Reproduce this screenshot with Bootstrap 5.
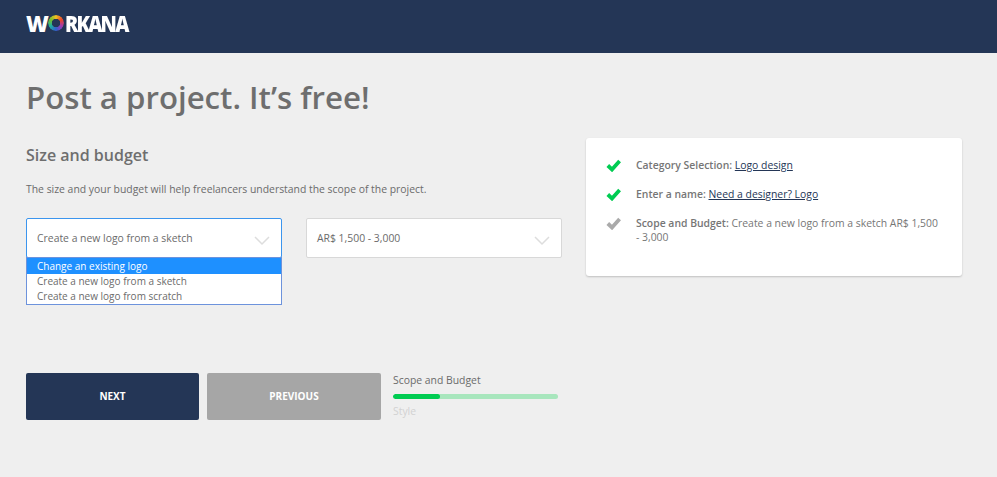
<!DOCTYPE html>
<html lang="en">
<head>
<meta charset="utf-8">
<title>Workana</title>
<link href="https://cdn.jsdelivr.net/npm/bootstrap@5.3.0/dist/css/bootstrap.min.css" rel="stylesheet">
<style>
html,body{height:477px;overflow:hidden}
body{background:#efefef;font-family:"Open Sans",sans-serif;color:#6b6b6b;font-size:10.4px}
.top-bar{height:53px;background:#243656;padding:11px 26px 0}
.brand-word{font-family:"Open Sans",sans-serif;font-weight:800;font-size:22px;line-height:24px;color:#fff;letter-spacing:-2px;display:flex;align-items:center}
.brand-o{display:inline-block;color:transparent;width:16px;height:16px;line-height:16px;margin:0 1px 0 1px;border-radius:50%;font-size:10px;letter-spacing:0;text-align:center;background:conic-gradient(#f0c020,#e8452c,#a23bb0,#3060d0,#20b0a0,#70c030,#f0c020);-webkit-mask:radial-gradient(circle,transparent 4px,#000 4.5px);mask:radial-gradient(circle,transparent 4px,#000 4.5px)}
.brand-rest{display:inline-block;transform:scaleX(.89);transform-origin:left center}
.page-body{padding:0 26px}
.page-title{font-size:31.2px;font-weight:600;color:#6e6e6e;line-height:44px;margin:22px 0 0}
.left-col{width:536px}
.right-col{width:376px;margin-left:24px;margin-top:19px}
.sub-title{font-size:16px;font-weight:600;color:#6e6e6e;line-height:22px;margin:25px 0 0}
.help-line{font-size:10.4px;line-height:14px;margin:16px 0 0}
.pick-row{gap:24px;margin-top:22px;height:155px}
.pick-wrap{width:256px;position:relative}
.pick-box{height:40px;background:#fff;border:1px solid #d8d8d8;border-radius:2px;padding:0 10px;line-height:38px;font-size:10.4px;position:relative}
.pick-box.is-open{border-color:#3b95ee}
.pick-chev{position:absolute;right:11px;top:17px}
.pick-list{border:1px solid #6d93dc;background:#fff;margin:0;padding:0;list-style:none;position:absolute;left:0;right:0;top:39px;font-size:10px}
.pick-list li{height:15px;line-height:15px;padding:0 10px}
.pick-list li.is-active{background:#1e90ff;color:#fff;height:16px;line-height:16px}
.act-btn{height:47px;border:0;border-radius:2px;color:#fff;font-size:10px;font-weight:700;width:173px;padding:0}
.btn-next{background:#243656}
.btn-next:hover{background:#243656;color:#fff}
.btn-prev{background:#a6a6a6;width:174px;margin-left:8px}
.step-box{width:165px;margin-left:12px;font-size:10.4px}
.step-now{line-height:14px}
.step-track{height:5px;margin:7px 0 5px;background:#a8e6bd;border-radius:3px;overflow:hidden}
.step-fill{height:5px;width:47px;background:#00cc52;border-radius:3px}
.step-next{color:#d2d2d2;line-height:14px}
.info-panel{background:#fff;border-radius:3px;box-shadow:0 1px 2px rgba(0,0,0,.2);height:138px;padding:20px 20px 0;border:0}
.info-row{display:flex;margin-bottom:15px;line-height:14px;color:#767676}
.info-row svg{flex:none;margin-right:15px}
.info-row b{font-weight:600}
.info-row a{color:#243656}
</style>
</head>
<body>
<header class="top-bar"><div class="brand-word">W<span class="brand-o">O</span><span class="brand-rest">RKANA</span></div></header>
<main class="page-body">
<h1 class="page-title">Post a project. It’s free!</h1>
<div class="d-flex">
<section class="left-col">
<h2 class="sub-title">Size and budget</h2>
<p class="help-line">The size and your budget will help freelancers understand the scope of the project.</p>
<div class="d-flex pick-row">
<div class="pick-wrap">
<div class="pick-box is-open">Create a new logo from a sketch
<svg class="pick-chev" width="16" height="10" viewBox="0 0 16 10"><path d="M1 1l7 7 7-7" fill="none" stroke="#ddd" stroke-width="1.500"/></svg></div>
<ul class="pick-list"><li class="is-active">Change an existing logo</li><li>Create a new logo from a sketch</li><li>Create a new logo from scratch</li></ul>
</div>
<div class="pick-wrap">
<div class="pick-box">AR$ 1,500 - 3,000
<svg class="pick-chev" width="16" height="10" viewBox="0 0 16 10"><path d="M1 1l7 7 7-7" fill="none" stroke="#ddd" stroke-width="1.500"/></svg></div>
</div>
</div>
<div class="d-flex align-items-start">
<button class="btn act-btn btn-next">NEXT</button>
<button class="btn act-btn btn-prev">PREVIOUS</button>
<div class="step-box"><div class="step-now">Scope and Budget</div><div class="step-track"><div class="step-fill"></div></div><div class="step-next">Style</div></div>
</div>
</section>
<aside class="right-col">
<div class="info-panel">
<div class="info-row"><svg width="15" height="14" viewBox="0 0 15 14"><path d="M1.800 7.500l4.200 4L13.600 3" fill="none" stroke="#00cc52" stroke-width="3.800"/></svg><div><b>Category Selection:</b> <a href="#">Logo design</a></div></div>
<div class="info-row"><svg width="15" height="14" viewBox="0 0 15 14"><path d="M1.800 7.500l4.200 4L13.600 3" fill="none" stroke="#00cc52" stroke-width="3.800"/></svg><div><b>Enter a name:</b> <a href="#">Need a designer? Logo</a></div></div>
<div class="info-row"><svg width="15" height="14" viewBox="0 0 15 14"><path d="M1.800 7.500l4.200 4L13.600 3" fill="none" stroke="#aaa" stroke-width="3.800"/></svg><div><b>Scope and Budget:</b> Create a new logo from a sketch AR$ 1,500 - 3,000</div></div>
</div>
</aside>
</div>
</main>
<script src="https://cdn.jsdelivr.net/npm/bootstrap@5.3.0/dist/js/bootstrap.bundle.min.js"></script>
</body>
</html>
